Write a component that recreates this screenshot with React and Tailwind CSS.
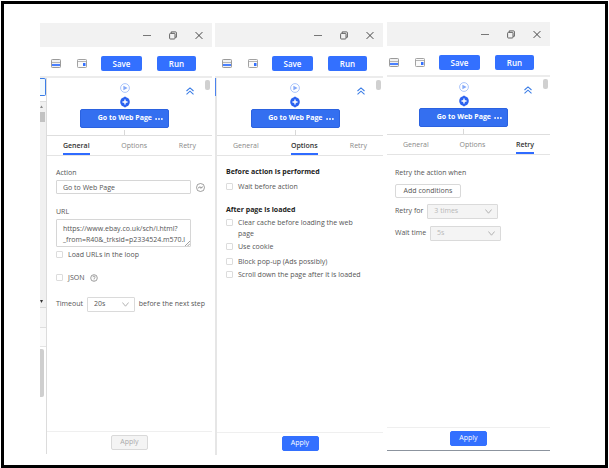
import React, { useState } from "react";

const MinimizeIcon = () => (
    <svg width="8" height="9" viewBox="0 0 8 9" fill="none" stroke="#777">
        <path d="M0 4.5h8" />
    </svg>
);

const RestoreIcon = () => (
    <svg width="8" height="9" viewBox="0 0 8 9" fill="none" stroke="#555" strokeWidth="0.9">
        <rect x="0.6" y="2.4" width="5.4" height="5.6" rx="0.8" />
        <path d="M2.2 2.2V0.9h4.4a0.8 0.8 0 0 1 0.8 0.8v4.6H6.2" />
    </svg>
);

const CloseIcon = () => (
    <svg width="8" height="9" viewBox="0 0 8 9" fill="none" stroke="#444">
        <path d="M0.6 1.1l6.8 6.8M7.4 1.1L0.6 7.9" />
    </svg>
);

const BottomPaneIcon = () => (
    <svg width="10" height="9" viewBox="0 0 10 9" fill="none">
        <rect x="0.5" y="0.5" width="9" height="8" rx="0.8" fill="#f1f1f1" stroke="#9a9a9a" />
        <path d="M1 3.5h8" stroke="#b4b4b4" />
        <rect x="1" y="5" width="8" height="2" fill="#4a80ff" />
    </svg>
);

const SidePaneIcon = () => (
    <svg width="10" height="9" viewBox="0 0 10 9" fill="none">
        <rect x="0.5" y="0.5" width="9" height="8" rx="0.8" fill="#fafafa" stroke="#a2a2a2" />
        <path d="M1 2.5h8" stroke="#b4b4b4" />
        <rect x="6" y="4" width="2.5" height="3" fill="#3370ff" />
    </svg>
);

const PlayIcon = () => (
    <svg width="10" height="10" viewBox="0 0 10 10" fill="none">
        <circle cx="5" cy="5" r="4.4" stroke="#a3c0fb" strokeWidth="0.9" />
        <path d="M3.4 2.7L7.6 5L3.4 7.3z" fill="#84a9f8" />
    </svg>
);

const PlusIcon = () => (
    <svg width="10" height="12" viewBox="0 0 10 12" fill="none">
        <path d="M5 0.2L6.4 2H3.6zM5 11.8L6.4 10H3.6z" fill="#2b62f0" />
        <circle cx="5" cy="6" r="4.8" fill="#2b62f0" />
        <path d="M5 3.5v5M2.5 6h5" stroke="#fff" strokeWidth="1.4" />
    </svg>
);

const CollapseIcon = () => (
    <svg width="8" height="8" viewBox="0 0 8 8" fill="none" stroke="#3b7de6" strokeWidth="1.1">
        <path d="M0.5 4L4 0.9L7.5 4M0.5 7.3L4 4.2L7.5 7.3" />
    </svg>
);

const LinkIcon = () => (
    <svg width="9" height="9" viewBox="0 0 9 9" fill="none" stroke="#777" strokeWidth="0.7">
        <circle cx="4.5" cy="4.5" r="4" />
        <path d="M1.9 4.8h1.2l0.8-1.2l1 1.8l0.9-1.4h1.3" />
    </svg>
);

const HelpIcon = () => (
    <svg width="8" height="8" viewBox="0 0 8 8" fill="none" stroke="#777" strokeWidth="0.7">
        <circle cx="4" cy="4" r="3.3" />
        <path d="M2.9 3.2a1.1 1.1 0 1 1 1.6 1C4.1 4.4 4 4.6 4 5M4 5.6v0.7" />
    </svg>
);

const Checkbox = ({ id, label }) => (
    <div className="flex items-start gap-[5px]">
        <input
            id={id}
            type="checkbox"
            className="mt-[2px] w-[7px] h-[7px] shrink-0 appearance-none rounded-[1px] border border-[#dcdcdc] bg-white checked:bg-[#3370ff]"
        />
        <label htmlFor={id} className="leading-[11px]">{label}</label>
    </div>
);

const Select = ({ id, value, disabled, className }) => (
    <div className={`relative ${className}`}>
        <select
            id={id}
            disabled={disabled}
            defaultValue={value}
            className="block w-full h-[15px] appearance-none rounded-[1px] border border-[#dadada] bg-white pl-[6px] text-[#555] disabled:bg-[#f4f4f4] disabled:text-[#b8b8b8] disabled:opacity-100"
        >
            <option>{value}</option>
        </select>
        <svg
            className="absolute right-[6px] top-[5px] pointer-events-none"
            width="7" height="5" viewBox="0 0 7 5" fill="none" stroke="#aaa" strokeWidth="0.9"
        >
            <path d="M0.4 0.5L3.5 4.2L6.6 0.5" />
        </svg>
    </div>
);

const WindowBar = () => (
    <div className="h-6 shrink-0 flex items-center justify-end gap-[18px] pr-[9px] bg-[#f2f2f2]">
        <button type="button" aria-label="Minimize"><MinimizeIcon /></button>
        <button type="button" aria-label="Restore"><RestoreIcon /></button>
        <button type="button" aria-label="Close"><CloseIcon /></button>
    </div>
);

const Toolbar = () => (
    <div className="h-[31px] shrink-0 flex items-center justify-end pr-4 pt-1 border-b-2 border-[#ececec]">
        <button type="button" aria-label="Bottom pane" className="mr-4"><BottomPaneIcon /></button>
        <button type="button" aria-label="Side pane" className="mr-[14px]"><SidePaneIcon /></button>
        <button type="button" className="w-[41px] h-[15px] mr-[15px] rounded-[2px] bg-[#3370ff] text-white text-[8px] leading-[15px] font-semibold">Save</button>
        <button type="button" className="w-[39px] h-[15px] rounded-[2px] bg-[#3370ff] text-white text-[8px] leading-[15px] font-semibold">Run</button>
    </div>
);

const Workflow = () => (
    <div className="relative h-[58px] shrink-0 flex flex-col items-center pt-[5px] pr-[10px] border-b border-[#dedede]">
        <PlayIcon />
        <div className="mt-[3px] mb-[1px]"><PlusIcon /></div>
        <button
            type="button"
            className="w-[89px] h-[19px] shrink-0 flex items-center justify-end gap-[3px] pr-[5px] rounded-[2px] border border-[#2b62e0] bg-[#346ff0] text-white font-bold whitespace-nowrap"
        >
            Go to Web Page
            <svg width="8" height="2" viewBox="0 0 8 2" fill="#fff">
                <circle cx="1.1" cy="1" r="0.9" />
                <circle cx="4" cy="1" r="0.9" />
                <circle cx="6.9" cy="1" r="0.9" />
            </svg>
        </button>
        <div className="w-px flex-1 mt-[2px] bg-[#d8d8d8]" />
        <button type="button" aria-label="Collapse" className="absolute right-[18px] top-[9px]"><CollapseIcon /></button>
        <div className="absolute right-[2px] top-[2px] w-[5px] h-[10px] rounded-[2px] bg-[#d0d0d0]" />
    </div>
);

const Tabs = ({ active, setActive }) => (
    <div role="tablist" className="h-5 shrink-0 flex justify-between px-4 border-b border-[#e4e4e4]">
        {["General", "Options", "Retry"].map((tab) => (
            <button
                key={tab}
                type="button"
                role="tab"
                aria-selected={active === tab}
                onClick={() => setActive(tab)}
                className={`pt-[3px] border-b-2 ${active === tab ? "border-[#2f6bff] text-[#333] font-semibold" : "border-transparent text-[#888]"}`}
            >
                {tab}
            </button>
        ))}
    </div>
);

const Panel = ({ tab, strip, applyDisabled, className, children }) => {
    const [active, setActive] = useState(tab);

    return (
        <section className={`min-w-0 flex flex-col bg-white ${className}`}>
            <WindowBar />
            <Toolbar />
            <div className="flex-1 flex">
                {strip}
                <div className="flex-1 min-w-0 flex flex-col">
                    <Workflow />
                    <Tabs active={active} setActive={setActive} />
                    <div className="flex-1">{children}</div>
                    <div className="h-[23px] shrink-0 flex justify-center pt-[3px] border-t border-[#efefef]">
                        <button
                            type="button"
                            disabled={applyDisabled}
                            className="w-[37px] h-[15px] rounded-[2px] border border-[#3370ff] bg-[#3370ff] text-white disabled:border-[#d9d9d9] disabled:bg-[#f4f4f4] disabled:text-[#aaa]"
                        >
                            Apply
                        </button>
                    </div>
                </div>
            </div>
        </section>
    );
};

// Edge of the workspace that shows to the left of the settings
const WorkspaceEdge = () => (
    <div className="w-[7px] shrink-0 flex flex-col border-r border-[#dcdcdc]">
        <div className="h-[18px] rounded-r-[2px] border border-l-0 border-[#3b7de6] bg-[#f0f9ff]" />
        <div className="h-[6px] border-b border-[#dedede]" />
        <div className="h-[206px] flex flex-col bg-[#f0f0f0] border-b border-[#d8d8d8]">
            <svg className="mt-[3px]" width="4" height="3" viewBox="0 0 4 3" fill="#888"><path d="M0 3L1.5 0.5L3 3z" /></svg>
            <div className="w-[5px] h-[10px] mt-[4px] bg-[#c2c2c2]" />
            <svg className="mt-auto mb-[4px]" width="4" height="3" viewBox="0 0 4 3" fill="#333"><path d="M0 0h3L1.5 3z" /></svg>
        </div>
        <div className="h-5 bg-[#f5f5f5] border-b border-[#dedede]" />
        <div className="h-[19px] bg-[#fafafa] border-b border-[#e4e4e4]" />
        <div className="w-1 h-12 mt-[2px] rounded-r-[2px] bg-[#cfcfcf]" />
    </div>
);

const ThinEdge = () => (
    <div className="w-[2px] shrink-0 bg-[#e6e6e6]">
        <div className="w-px h-[18px] bg-[#4c83ee]" />
    </div>
);

const GeneralForm = () => (
    <div className="pt-[11px] pl-[9px] pr-[7px]">
        <label htmlFor="action" className="block leading-[11px]">Action</label>
        <div className="mt-[2px] flex items-center gap-[5px]">
            <input
                id="action"
                type="text"
                defaultValue="Go to Web Page"
                className="flex-1 min-w-0 h-[14px] px-[6px] rounded-[1px] border border-[#d6d6d6]"
            />
            <button type="button" aria-label="Link"><LinkIcon /></button>
        </div>
        <label htmlFor="url" className="block mt-3 leading-[11px]">URL</label>
        <div className="relative mt-[2px] mr-[14px]">
            <textarea
                id="url"
                rows={2}
                defaultValue={"https://www.ebay.co.uk/sch/i.html?\n_from=R40&_trksid=p2334524.m570.l"}
                className="block w-full h-7 px-[6px] pt-[3px] leading-[11px] resize-none overflow-hidden whitespace-pre rounded-[1px] border border-[#d6d6d6]"
            />
            <svg className="absolute right-[1px] bottom-[1px]" width="5" height="5" viewBox="0 0 5 5" stroke="#777" strokeWidth="0.7">
                <path d="M0 5L5 0M2.6 5L5 2.6" />
            </svg>
        </div>
        <div className="mt-[2px]"><Checkbox id="loop" label="Load URLs in the loop" /></div>
        <div className="mt-3 flex items-center gap-[6px]">
            <Checkbox id="json" label="JSON" />
            <HelpIcon />
        </div>
        <div className="mt-[14px] flex items-center whitespace-nowrap">
            <label htmlFor="timeout" className="mr-1">Timeout</label>
            <Select id="timeout" value="20s" className="w-12 mr-1" />
            <span>before the next step</span>
        </div>
    </div>
);

const OptionsForm = () => (
    <div className="pt-[10px] pl-[9px] pr-[20px]">
        <h3 className="leading-[11px] font-bold text-[#222]">Before action is performed</h3>
        <div className="mt-1"><Checkbox id="wait" label="Wait before action" /></div>
        <h3 className="mt-3 leading-[11px] font-bold text-[#222]">After page is loaded</h3>
        <div className="mt-[2px] flex flex-col gap-[2px]">
            <Checkbox id="cache" label="Clear cache before loading the web page" />
            <Checkbox id="cookie" label="Use cookie" />
            <div className="mt-[2px]"><Checkbox id="popup" label="Block pop-up (Ads possibly)" /></div>
            <Checkbox id="scroll" label="Scroll down the page after it is loaded" />
        </div>
    </div>
);

const RetryForm = () => (
    <div className="pt-3 pl-2">
        <p className="leading-[11px]">Retry the action when</p>
        <button type="button" className="block w-[66px] h-[14px] mt-[6px] rounded-[2px] border border-[#d9d9d9] bg-white">Add conditions</button>
        <div className="mt-[6px] flex items-center gap-1">
            <label htmlFor="retry">Retry for</label>
            <Select id="retry" value="3 times" disabled className="w-[71px]" />
        </div>
        <div className="mt-[7px] flex items-center gap-1">
            <label htmlFor="waitTime">Wait time</label>
            <Select id="waitTime" value="5s" disabled className="w-[71px]" />
        </div>
    </div>
);

const App = () => {
    return (
        <main className="min-h-screen flex px-px pt-px bg-white text-[7px] text-[#555] font-['Open_Sans','Noto_Sans',sans-serif]">
            <div className="flex-1 grid grid-cols-[172fr_168fr_164fr] gap-[3px] pl-9 pr-[55px] border-[3px] border-black">
                <Panel tab="General" applyDisabled strip={<WorkspaceEdge />} className="mt-[19px] mb-[11px]">
                    <GeneralForm />
                </Panel>
                <Panel tab="Options" strip={<ThinEdge />} className="mt-[19px] mb-[10px]">
                    <OptionsForm />
                </Panel>
                <Panel tab="Retry" className="mt-[18px] mb-[14px] ml-px border-b border-[#8c949e]">
                    <RetryForm />
                </Panel>
            </div>
        </main>
    );
};

export default App;
